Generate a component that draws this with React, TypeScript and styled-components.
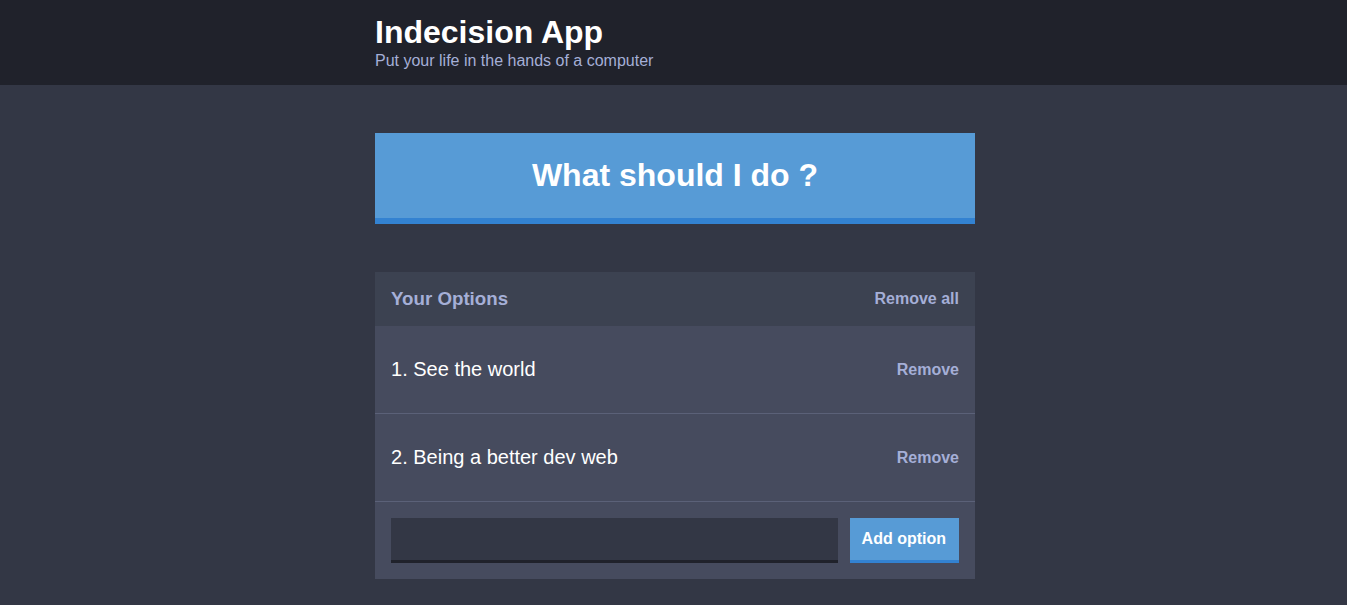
import React from "react";
import styled, { createGlobalStyle } from "styled-components";

const GlobalStyle = createGlobalStyle`
  html, body { margin: 0; padding: 0; }
  body {
    background: #333745;
    font-family: "Liberation Sans", Arial, sans-serif;
    color: #ffffff;
  }
  * { box-sizing: border-box; }
`;

const Header = styled.header`
  background: #20222b;
  padding: 16px 0 14px;
  margin-bottom: 48px;
`;

const Container = styled.div`
  width: 600px;
  margin-left: calc(50% - 298.5px);
`;

const Title = styled.h1`
  margin: 0;
  font-size: 32px;
  font-weight: 700;
  line-height: 33px;
  color: #ffffff;
`;

const Subtitle = styled.h2`
  margin: 2px 0 0;
  font-size: 16px;
  font-weight: 400;
  line-height: 20px;
  color: #a5afd7;
`;

const BigButton = styled.button`
  display: block;
  width: 100%;
  background: #579bd6;
  border: none;
  border-bottom: 6px solid #3382d1;
  color: #ffffff;
  font-family: inherit;
  font-weight: 700;
  font-size: 32px;
  line-height: 37px;
  padding: 24px;
  margin: 0 0 48px;
  cursor: pointer;
`;

const Widget = styled.div`
  background: #464b5e;
  margin-bottom: 48px;
`;

const WidgetHeader = styled.div`
  background: #3c4251;
  display: flex;
  justify-content: space-between;
  align-items: center;
  padding: 16px;
  height: 54px;
`;

const WidgetTitle = styled.h3`
  margin: 0;
  font-size: 18.72px;
  font-weight: 700;
  color: #a5afd7;
`;

const LinkButton = styled.button`
  background: none;
  border: none;
  padding: 0;
  font-family: inherit;
  font-size: 16px;
  font-weight: 700;
  color: #a5afd7;
  cursor: pointer;
`;

const OptionRow = styled.div`
  display: flex;
  justify-content: space-between;
  align-items: center;
  padding: 32px 16px;
  border-bottom: 1px solid #5b6178;
`;

const OptionText = styled.p`
  margin: 0;
  font-size: 20px;
  line-height: 23px;
  color: #ffffff;
`;

const AddForm = styled.form`
  display: flex;
  padding: 16px;
  gap: 12px;
`;

const Input = styled.input`
  flex: 1;
  height: 45px;
  background: #333745;
  border: none;
  border-bottom: 3px solid #20222b;
  color: #a5afd7;
  font-family: inherit;
  font-size: 16px;
  padding: 12px;
  outline: none;
`;

const AddButton = styled.button`
  height: 45px;
  background: #579bd6;
  border: none;
  border-bottom: 3px solid #3382d1;
  color: #ffffff;
  font-family: inherit;
  font-size: 16px;
  font-weight: 700;
  padding: 0 13px 0 12px;
  cursor: pointer;
`;

const options = ["See the world", "Being a better dev web"];

export default function App() {
  return (
    <>
      <GlobalStyle />
      <Header>
        <Container>
          <Title>Indecision App</Title>
          <Subtitle>Put your life in the hands of a computer</Subtitle>
        </Container>
      </Header>
      <Container>
        <BigButton>What should I do ?</BigButton>
        <Widget>
          <WidgetHeader>
            <WidgetTitle>Your Options</WidgetTitle>
            <LinkButton>Remove all</LinkButton>
          </WidgetHeader>
          {options.map((o, i) => (
            <OptionRow key={o}>
              <OptionText>
                {i + 1}. {o}
              </OptionText>
              <LinkButton>Remove</LinkButton>
            </OptionRow>
          ))}
          <AddForm onSubmit={(e) => e.preventDefault()}>
            <Input type="text" name="option" />
            <AddButton>Add option</AddButton>
          </AddForm>
        </Widget>
      </Container>
    </>
  );
}
